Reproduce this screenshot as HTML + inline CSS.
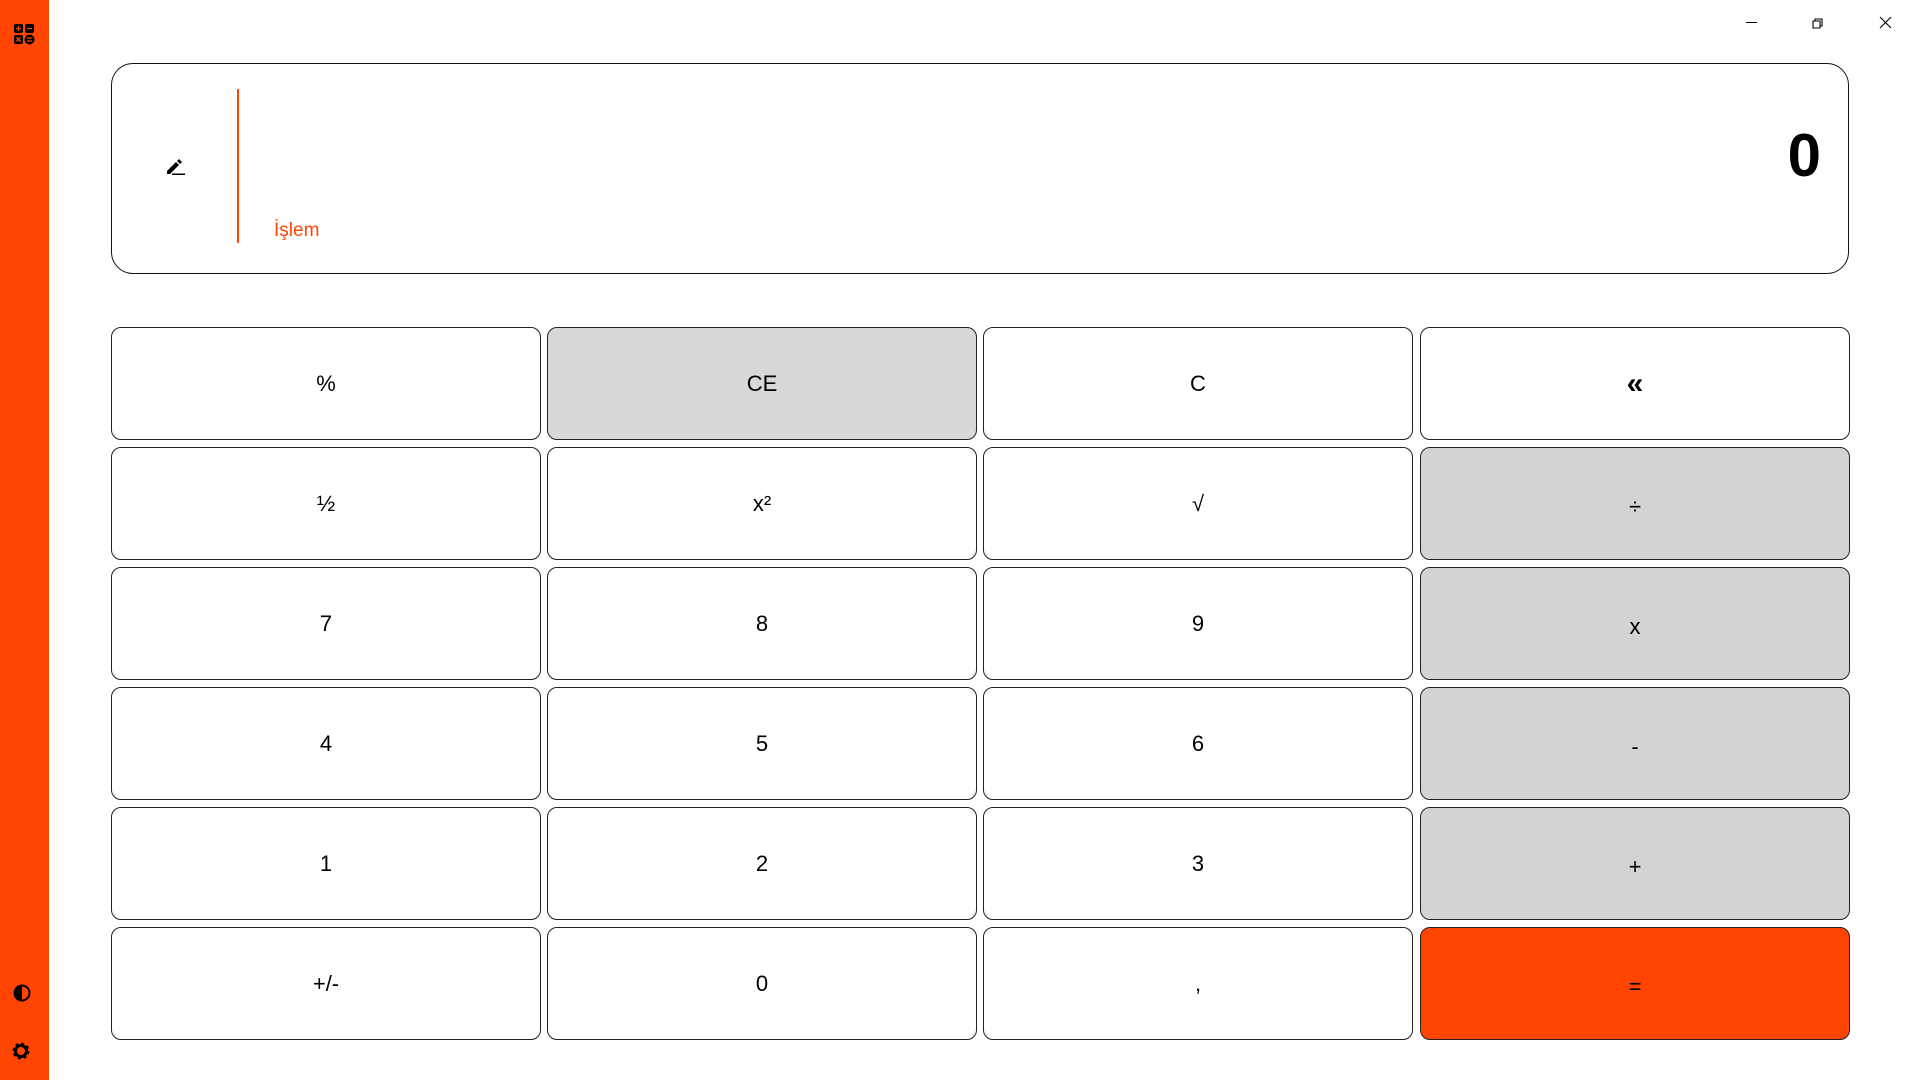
<!DOCTYPE html>
<html><head><meta charset="utf-8"><style>
*{margin:0;padding:0;box-sizing:border-box}
body{width:1920px;height:1080px;background:#fff;position:relative;overflow:hidden;font-family:"Liberation Sans",Arial,sans-serif}
.side{position:absolute;left:0;top:0;width:49px;height:1080px;background:#ff4500}
.disp{position:absolute;left:111px;top:63px;width:1738px;height:211px;border:1.5px solid #111;border-radius:22px}
.btn{position:absolute;width:430px;height:113px;border:1.5px solid #222;border-radius:10px;background:#fff;display:flex;align-items:center;justify-content:center;font-size:22px;color:#000}
.g{background:#d3d3d3}.ce{background:#d8d8d8}.eq{background:#ff4500}
.g span,.eq span{position:relative;top:3px}
</style></head><body>
<div class="side">
<svg style="position:absolute;left:14px;top:24px" width="21" height="21" viewBox="0 0 21 21"><rect x="0" y="0" width="9" height="9" rx="2"/><rect x="11" y="0" width="9" height="9" rx="2"/><rect x="0" y="11" width="9" height="9" rx="2"/><circle cx="15.5" cy="15.5" r="5"/><path d="M4.5 2v5M2 4.5h5M13 4.5h5M13 14h5M13 17h5M2.5 13.5l4 4M6.5 13.5l-4 4" stroke="#ff4500" stroke-width="1.3"/></svg>
<svg style="position:absolute;left:13px;top:984px" width="18" height="18" viewBox="0 0 18 18"><circle cx="9" cy="9" r="7.5" fill="none" stroke="#000" stroke-width="2"/><path d="M9 1.5a7.5 7.5 0 0 0 0 15z"/></svg>
<svg style="position:absolute;left:11px;top:1041px" width="20" height="20" viewBox="0 0 20 20"><circle cx="10" cy="10" r="6.5" fill="none" stroke="#000" stroke-width="4" stroke-dasharray="2.6 2.5"/><circle cx="10" cy="10" r="5.5" fill="none" stroke="#000" stroke-width="3"/></svg>
</div>
<svg style="position:absolute;left:1742px;top:16px" width="160" height="14"><path d="M4 6.5h11M71 5h7v7h-7zM73 5V3h7v7h-2M138 1l11 11M149 1l-11 11" stroke="#000" stroke-width="1.1" fill="none"/></svg>
<div class="disp">
<svg style="position:absolute;left:54px;top:94px" width="20" height="18" viewBox="0 0 20 18"><path d="M1 13l9-9 3 3-9 9H1z M11 3l2-2 3 3-2 2z"/><rect x="6" y="15.5" width="13" height="1.5"/></svg>
<div style="position:absolute;left:125px;top:25px;width:2px;height:154px;background:#ff4500"></div>
<div style="position:absolute;left:162px;top:156px;font-size:19px;color:#ff4500">İşlem</div>
<div style="position:absolute;right:27px;top:62px;font-size:60px;font-weight:bold;line-height:1">0</div>
</div>
<div class="btn" style="left:111px;top:327px">%</div>
<div class="btn ce" style="left:547px;top:327px">CE</div>
<div class="btn" style="left:983px;top:327px">C</div>
<div class="btn" style="left:1420px;top:327px;font-size:30px;font-weight:bold">«</div>
<div class="btn" style="left:111px;top:447px">½</div>
<div class="btn" style="left:547px;top:447px">x²</div>
<div class="btn" style="left:983px;top:447px">√</div>
<div class="btn g" style="left:1420px;top:447px"><span>÷</span></div>
<div class="btn" style="left:111px;top:567px">7</div>
<div class="btn" style="left:547px;top:567px">8</div>
<div class="btn" style="left:983px;top:567px">9</div>
<div class="btn g" style="left:1420px;top:567px"><span>x</span></div>
<div class="btn" style="left:111px;top:687px">4</div>
<div class="btn" style="left:547px;top:687px">5</div>
<div class="btn" style="left:983px;top:687px">6</div>
<div class="btn g" style="left:1420px;top:687px"><span>-</span></div>
<div class="btn" style="left:111px;top:807px">1</div>
<div class="btn" style="left:547px;top:807px">2</div>
<div class="btn" style="left:983px;top:807px">3</div>
<div class="btn g" style="left:1420px;top:807px"><span>+</span></div>
<div class="btn" style="left:111px;top:927px">+/-</div>
<div class="btn" style="left:547px;top:927px">0</div>
<div class="btn" style="left:983px;top:927px">,</div>
<div class="btn eq" style="left:1420px;top:927px"><span>=</span></div>
</body></html>
